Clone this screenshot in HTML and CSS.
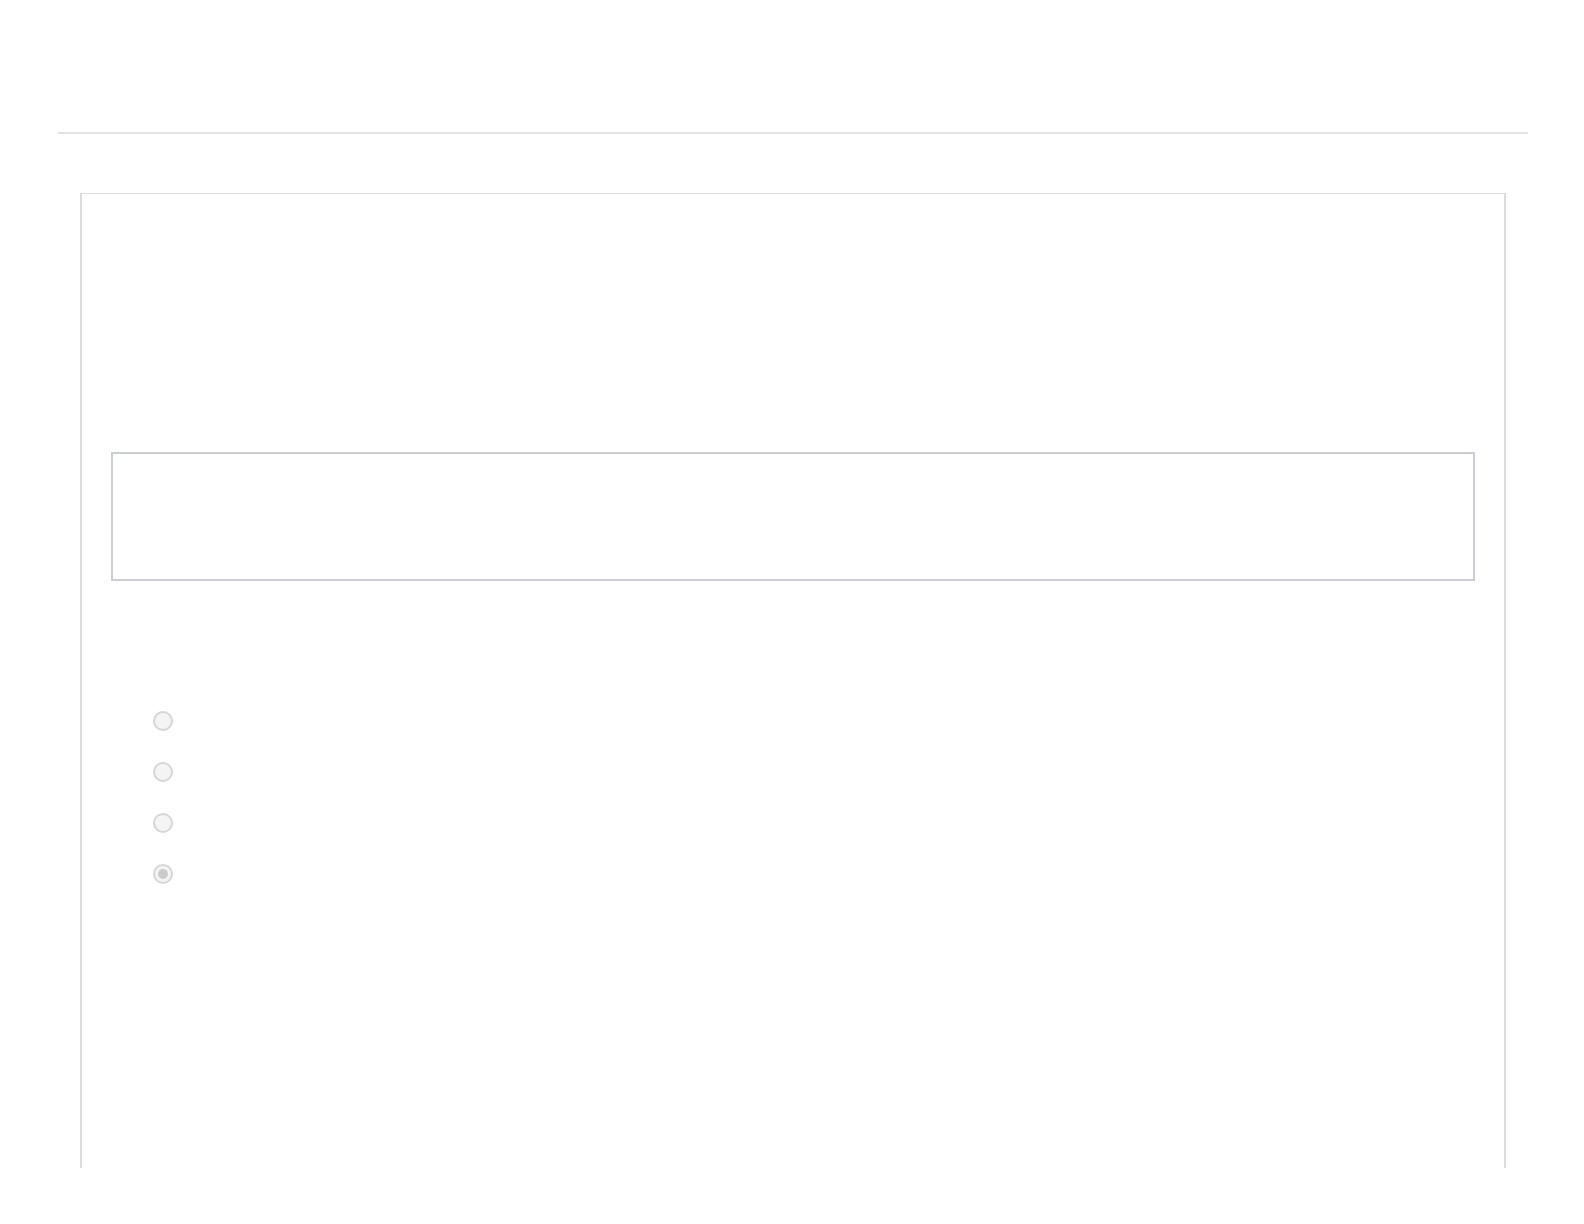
FILE: index.html
```html
<!DOCTYPE html>
<html lang="en">
<head>
    <meta charset="UTF-8">
    <meta name="viewport" content="width=device-width, initial-scale=1.0">
    <title>Form</title>
    <link rel="stylesheet" href="styles.css">
</head>
<body>
    <div class="page">
        <hr class="divider">

        <div class="panel">
            <div class="field-box"></div>

            <ul class="options">
                <li class="option"><span class="radio"></span></li>
                <li class="option"><span class="radio"></span></li>
                <li class="option"><span class="radio"></span></li>
                <li class="option"><span class="radio checked"></span></li>
            </ul>
        </div>
    </div>
</body>
</html>
```

FILE: styles.css
```css
body {
    margin: 0;
    padding: 0;
    background: #fff;
    font-family: 'Liberation Sans', Arial, sans-serif;
}

.page {
    padding-top: 132px;
    height: 1092px;
    overflow: hidden;
}

.divider {
    margin: 0 0 0 58px;
    width: 1470px;
    height: 2px;
    border: none;
    background-color: #e6e2e4;
}

.panel {
    margin: 59px 0 0 80px;
    width: 1364px;
    height: 716px;
    border-top: 1px solid #dedede;
    border-left: 2px solid #dcdcdc;
    border-right: 2px solid #dcdcdc;
    padding: 258px 29px 0 29px;
}

.field-box {
    height: 125px;
    border: 2px solid #c8cdd6;
}

.options {
    list-style: none;
    margin: 0;
    padding: 130px 0 0 42px;
}

.option {
    height: 51px;
    display: flex;
    align-items: flex-start;
}

.radio {
    width: 16px;
    height: 16px;
    border: 2px solid #d6d6d6;
    border-radius: 50%;
    background-color: #f4f4f4;
    display: flex;
    justify-content: center;
    align-items: center;
}

.radio.checked::after {
    content: "";
    width: 10px;
    height: 10px;
    border-radius: 50%;
    background-color: #cbcbcb;
}
```
